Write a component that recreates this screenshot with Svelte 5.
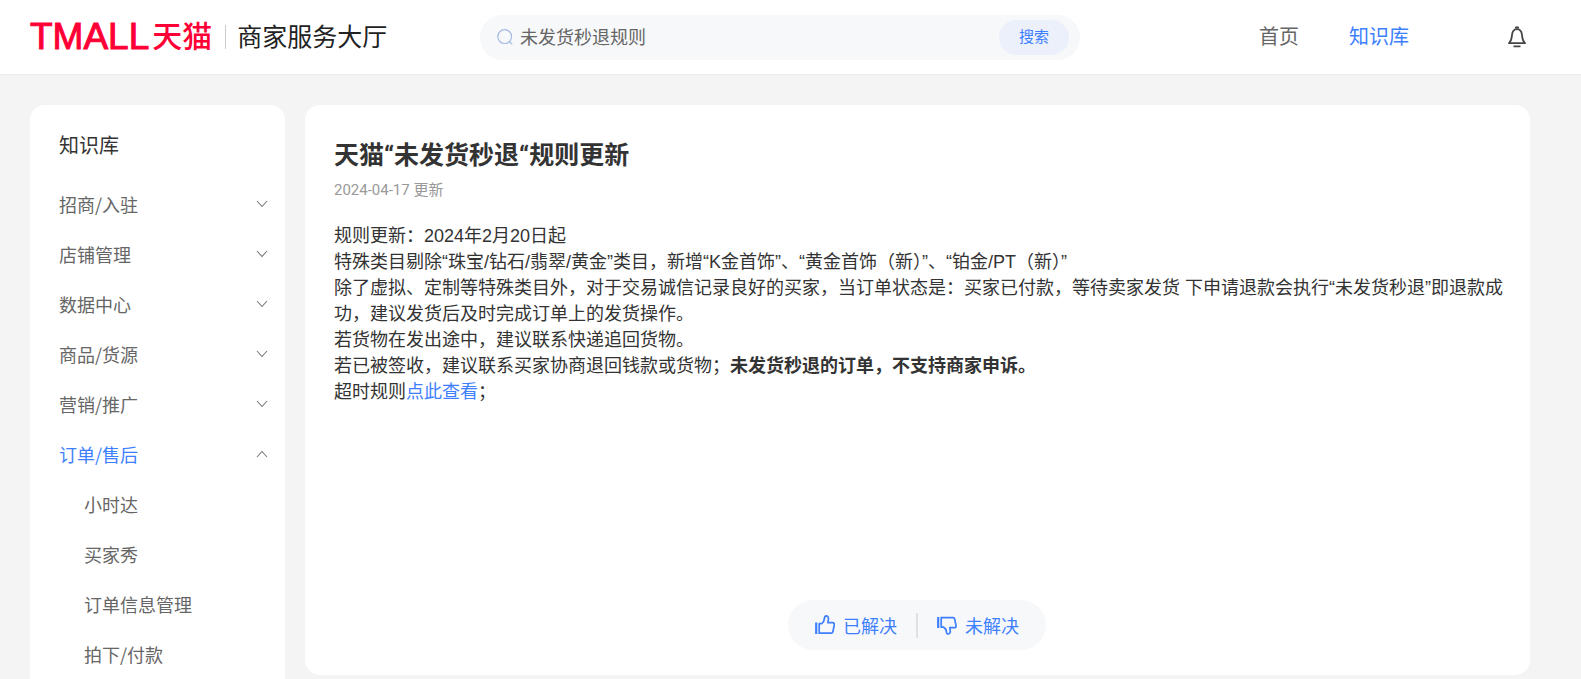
<script lang="ts">
	let keyword = $state('未发货秒退规则');
	let openMenu = $state('订单/售后');
	let solved = $state<boolean | null>(null);

	const menus = [
		{ name: '招商/入驻', children: [] },
		{ name: '店铺管理', children: [] },
		{ name: '数据中心', children: [] },
		{ name: '商品/货源', children: [] },
		{ name: '营销/推广', children: [] },
		{ name: '订单/售后', children: ['小时达', '买家秀', '订单信息管理', '拍下/付款'] }
	];

	function toggle(name: string) {
		openMenu = openMenu === name ? '' : name;
	}
</script>

<div class="page">
	<header>
		<div class="brand">
			<a class="logo" href="#home"><span class="en">TMALL</span><span class="cn">天猫</span></a>
			<span class="site">商家服务大厅</span>
		</div>
		<form class="search" role="search" onsubmit={(e) => e.preventDefault()}>
			<svg width="16" height="16" viewBox="0 0 16 16" fill="none" stroke="#a5bae3" stroke-width="1.2" aria-hidden="true">
				<circle cx="7.7" cy="7.6" r="6.9" />
				<path d="M12.2 12.4l3 3" />
			</svg>
			<input type="text" aria-label="搜索" bind:value={keyword} />
			<button>搜索</button>
		</form>
		<nav class="top-nav">
			<a href="#home">首页</a>
			<a class="active" href="#knowledge">知识库</a>
		</nav>
		<button class="bell" aria-label="消息">
			<svg width="18" height="22" viewBox="0 0 18 22" fill="none" stroke="#444" stroke-width="1.8" stroke-linejoin="round" aria-hidden="true">
				<path d="M1 17.2h16c-1.600-1.500-2.200-2.800-2.600-5.200l-.4-3c-.4-3.600-2-5.800-5-5.800S4.400 5.400 4 9l-.4 3c-.4 2.400-1 3.700-2.600 5.200z" />
				<path d="M7.600 2.600c0-2 2.800-2 2.800 0M5.500 20.400h7" />
			</svg>
		</button>
	</header>

	<div class="layout">
		<aside>
			<h2>知识库</h2>
			{#each menus as menu}
				<button class="menu" class:active={openMenu === menu.name} aria-expanded={openMenu === menu.name} onclick={() => toggle(menu.name)}>
					<span>{menu.name}</span>
					<svg class:up={openMenu === menu.name} width="12" height="8" viewBox="0 0 12 8" fill="none" stroke="#777" stroke-width="1.1" aria-hidden="true">
						<path d="M1 1l5 5.500L11 1" />
					</svg>
				</button>
				{#if openMenu === menu.name}
					{#each menu.children as child}
						<a class="sub" href="#{child}">{child}</a>
					{/each}
				{/if}
			{/each}
		</aside>

		<main>
			<h1>天猫“未发货秒退“规则更新</h1>
			<p class="date">2024-04-17 更新</p>
			<article>
				<p>规则更新：2024年2月20日起</p>
				<p>特殊类目剔除“珠宝/钻石/翡翠/黄金”类目，新增“K金首饰”、“黄金首饰（新）”、“铂金/PT（新）”</p>
				<p>除了虚拟、定制等特殊类目外，对于交易诚信记录良好的买家，当订单状态是：买家已付款，等待卖家发货 下申请退款会执行“未发货秒退”即退款成功，建议发货后及时完成订单上的发货操作。</p>
				<p>若货物在发出途中，建议联系快递追回货物。</p>
				<p>若已被签收，建议联系买家协商退回钱款或货物；<strong>未发货秒退的订单，不支持商家申诉。</strong></p>
				<p>超时规则<a href="#timeout">点此查看</a>；</p>
			</article>
			<div class="feedback">
				<button aria-pressed={solved === true} onclick={() => (solved = true)}>
					<svg width="20" height="20" viewBox="0 0 20 20" fill="none" stroke="currentColor" stroke-width="1.700" stroke-linejoin="round" aria-hidden="true">
						<path d="M1.200 7.500v11.500" stroke-width="2.200" />
						<path d="M4.200 18.200V8.600h2.600c1.500-1 2.500-3.200 2.700-5.400.1-1.500.9-2.300 1.900-2.300 1.700 0 2.200 1.800 2 3.500l-.6 3.200h4.800c1.300 0 1.900.9 1.700 2l-1.400 7.200c-.2.900-.8 1.400-1.700 1.400z" />
					</svg>
					已解决
				</button>
				<span class="line"></span>
				<button aria-pressed={solved === false} onclick={() => (solved = false)}>
					<svg width="20" height="20" viewBox="0 0 20 20" fill="none" stroke="currentColor" stroke-width="1.700" stroke-linejoin="round" aria-hidden="true">
						<path d="M1.200 2v11" stroke-width="2.200" />
						<path d="M4.200 2.600v9.600h2.600c1.500 1 2.400 2.300 2.600 4.500.1 1.500.9 2.300 1.900 2.300 1.600 0 2.100-1.600 1.900-3.300l-.4-3h4.500c1.300 0 1.900-.9 1.700-2l-1.300-6.700c-.2-.9-.8-1.400-1.700-1.400z" />
					</svg>
					未解决
				</button>
			</div>
		</main>
	</div>
</div>

<style>
	:global(body) { margin: 0; background: #f4f4f4; color: #333; font-family: "Liberation Sans", "Noto Sans CJK SC", sans-serif; }
	a { color: #3d7fff; text-decoration: none; }
	button, input { box-sizing: border-box; border: 0; padding: 0; background: none; color: inherit; font: inherit; }
	button { cursor: pointer; }
	h1, h2, p { margin: 0; }
	svg { flex: none; display: block; }

	.page { display: flex; flex-direction: column; height: 100vh; }
	header {
		box-sizing: border-box;
		flex: none;
		display: flex;
		align-items: center;
		height: 75px;
		padding: 0 55px 0 30px;
		border-bottom: 1px solid #ececec;
		background: #fff;
	}
	.brand { flex: 0 0 450px; display: flex; align-items: center; }
	.logo { display: flex; align-items: center; gap: 3px; color: #ff0036; line-height: 42px; }
	.en { font-size: 37px; -webkit-text-stroke: 1px #ff0036; }
	.cn { font-size: 30px; font-weight: 500; }
	.site {
		margin-left: 13px;
		padding-left: 11px;
		border-left: 1px solid #ccc;
		color: #222;
		font-size: 25px;
		line-height: 24px;
	}
	.search {
		box-sizing: border-box;
		flex: 0 1 600px;
		display: flex;
		align-items: center;
		gap: 7px;
		height: 45px;
		padding: 0 11px 0 17px;
		border-radius: 23px;
		background: #f7f8fa;
	}
	.search input { flex: 1; min-width: 0; padding-bottom: 2px; color: #666; font-size: 18px; outline: none; }
	.search button {
		width: 70px;
		height: 35px;
		padding-bottom: 3px;
		border-radius: 18px;
		background: #ebf0fb;
		color: #3d7fff;
		font-size: 15px;
	}
	.top-nav { display: flex; gap: 50px; margin-left: auto; padding-bottom: 3px; font-size: 20px; white-space: nowrap; }
	.top-nav a { color: #666; }
	.top-nav a.active { color: #3d7fff; }
	.bell { margin-left: 99px; }

	.layout { flex: 1; min-height: 0; display: flex; gap: 20px; padding: 30px 51px 0 30px; }
	aside {
		box-sizing: border-box;
		flex: 0 0 255px;
		padding: 25px 17px 0 29px;
		overflow-y: auto;
		scrollbar-width: none;
		border-radius: 15px 15px 0 0;
		background: #fff;
		font-family: "Noto Sans CJK SC", sans-serif;
	}
	h2 { margin-bottom: 19px; font-size: 20px; font-weight: 400; line-height: 30px; }
	.menu {
		display: flex;
		justify-content: space-between;
		align-items: center;
		width: 100%;
		height: 50px;
		color: #666;
		font-size: 18px;
		line-height: 50px;
	}
	.menu.active { color: #3d7fff; }
	.up { transform: rotate(180deg); }
	.sub { display: block; padding-left: 25px; color: #666; font-size: 18px; line-height: 50px; }

	main {
		box-sizing: border-box;
		flex: 1;
		display: flex;
		flex-direction: column;
		min-width: 0;
		margin-bottom: 4px;
		padding: 32px 16px 25px 29px;
		border-radius: 15px;
		background: #fff;
	}
	h1, .date { font-family: Roboto, "Noto Sans CJK SC", sans-serif; }
	h1 { font-size: 25px; line-height: 38px; }
	.date { color: #999; font-size: 15px; line-height: 30px; }
	article { flex: 1; margin-top: 18px; font-size: 18px; line-height: 26px; }
	.feedback {
		align-self: center;
		display: flex;
		align-items: center;
		gap: 19px;
		height: 50px;
		margin-right: 14px;
		padding: 0 27px;
		border-radius: 25px;
		background: #f7f8fa;
	}
	.feedback button { display: flex; align-items: center; gap: 8px; color: #3d7fff; font-size: 18px; }
	.line { width: 2px; height: 25px; background: #dfe1e5; }
</style>
